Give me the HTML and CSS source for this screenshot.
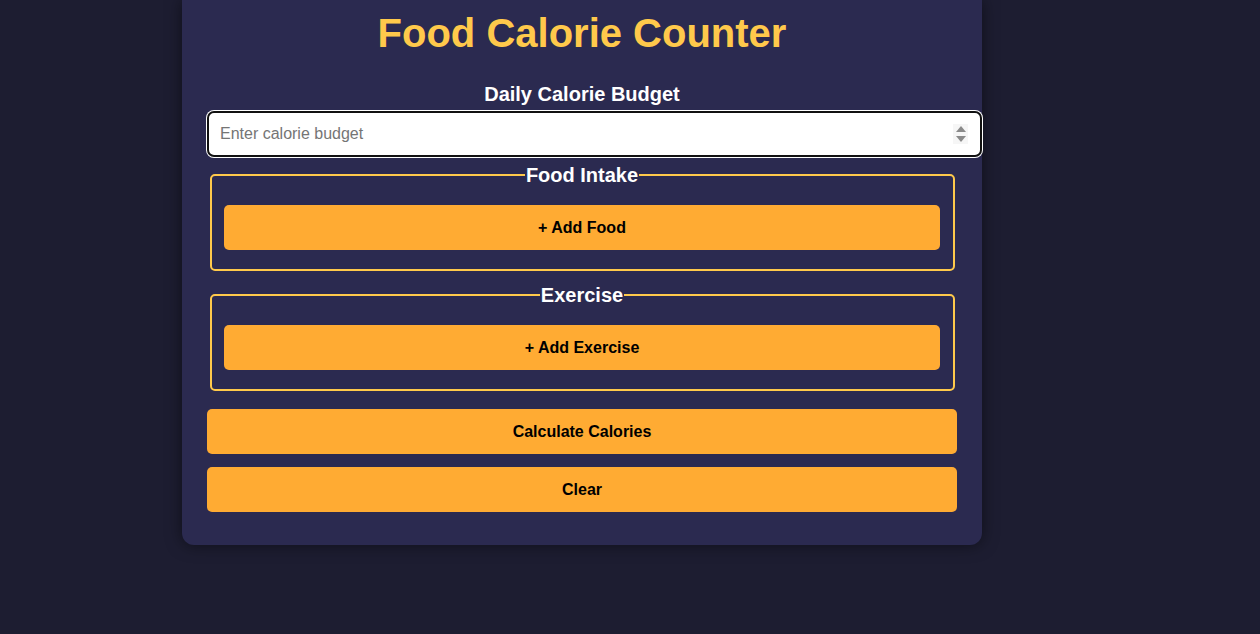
FILE: index.html
```html
<!DOCTYPE html>
<html lang="en">
<head>
<meta charset="utf-8">
<title>Food Calorie Counter</title>
<link rel="stylesheet" href="styles.css">
</head>
<body>
<div class="card">
  <h1 class="title">Food Calorie Counter</h1>
  <label class="budget-label" for="budget">Daily Calorie Budget</label>
  <div class="input-wrap">
    <input id="budget" class="budget-input" type="text" placeholder="Enter calorie budget">
    <span class="spinner">
      <svg width="12" height="20" viewBox="0 0 12 20"><path d="M6 2 L11 8 H1 Z" fill="#8a8a8a"/><path d="M1 12 H11 L6 18 Z" fill="#8a8a8a"/></svg>
    </span>
  </div>
  <fieldset class="group">
    <legend class="group-legend">Food Intake</legend>
    <button class="btn">+ Add Food</button>
  </fieldset>
  <fieldset class="group">
    <legend class="group-legend">Exercise</legend>
    <button class="btn">+ Add Exercise</button>
  </fieldset>
  <button class="btn btn-wide">Calculate Calories</button>
  <button class="btn btn-wide">Clear</button>
</div>
</body>
</html>
```

FILE: styles.css
```css
* { box-sizing: border-box; }
html, body { margin: 0; padding: 0; }
body {
  background: #1d1d31;
  font-family: "Liberation Sans", Arial, sans-serif;
  display: flex;
  flex-direction: column;
  align-items: center;
  min-height: 100vh;
  padding-right: 96px;
}
.card {
  width: 800px;
  background: #2b2a50;
  border-radius: 0 0 12px 12px;
  padding: 10px 25px 33px;
  box-shadow: 0 0 16px rgba(0,0,0,0.5);
  display: flex;
  flex-direction: column;
}
.title {
  margin: 0 0 27px;
  font-size: 40px;
  line-height: 46px;
  font-weight: bold;
  color: #ffc94b;
  text-align: center;
}
.budget-label {
  display: block;
  text-align: center;
  color: #ffffff;
  font-weight: bold;
  font-size: 20px;
  line-height: 23px;
  margin-bottom: 5px;
}
.input-wrap {
  position: relative;
  width: 775px;
  height: 46px;
}
.budget-input {
  width: 100%;
  height: 100%;
  border: 2px solid #111;
  border-radius: 7px;
  box-shadow: 0 0 0 1px #ffffff;
  background: #fff;
  padding: 0 11px;
  font-family: "Liberation Sans", Arial, sans-serif;
  font-size: 16px;
  color: #222;
  outline: none;
}
.budget-input::placeholder { color: #757575; }
.spinner {
  position: absolute;
  right: 14px;
  top: 13px;
  width: 15px;
  height: 20px;
  display: flex;
  align-items: center;
  justify-content: center;
  background: #f6f6f6;
}
.group {
  margin: 8px 2px 12px 3px;
  border: 2px solid #ffc94b;
  border-radius: 5px;
  padding: 20px 13px 19px 12px;
}
.group + .group { margin-top: 2px; margin-bottom: 18px; }
.group-legend {
  margin: 0 auto;
  padding: 0 1px;
  color: #fff;
  font-weight: bold;
  font-size: 20px;
  line-height: 20px;
}
.btn {
  display: block;
  width: 100%;
  height: 45px;
  border: none;
  border-radius: 5px;
  background: #ffab33;
  color: #000;
  font-family: "Liberation Sans", Arial, sans-serif;
  font-weight: bold;
  font-size: 16px;
  cursor: pointer;
}
.btn-wide + .btn-wide { margin-top: 13px; }
```
